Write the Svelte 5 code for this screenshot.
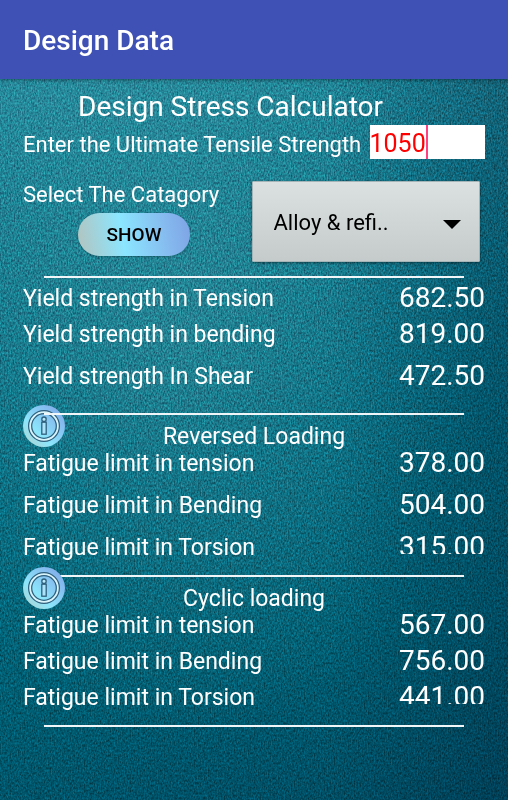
<!--
  Design Stress Calculator

  Takes the ultimate tensile strength and a material category and lists
  the yield strengths and fatigue limits.
-->

<script>
  let tensile = $state("1050");
  let category = $state("alloy");
  let applied = $state(1050);

  const format = (factor) => (applied * factor).toFixed(2);

  const yieldRows = $derived([
    { label: "Yield strength in Tension", value: format(0.65) },
    { label: "Yield strength in bending", value: format(0.78) },
    { label: "Yield strength In Shear", value: format(0.45) },
  ]);

  const loadings = $derived([
    {
      id: "reversed",
      title: "Reversed Loading",
      rows: [
        { label: "Fatigue limit in tension", value: format(0.36) },
        { label: "Fatigue limit in Bending", value: format(0.48) },
        { label: "Fatigue limit in Torsion", value: format(0.3) },
      ],
    },
    {
      id: "cyclic",
      title: "Cyclic loading",
      rows: [
        { label: "Fatigue limit in tension", value: format(0.54) },
        { label: "Fatigue limit in Bending", value: format(0.72) },
        { label: "Fatigue limit in Torsion", value: format(0.42) },
      ],
    },
  ]);

  function show() {
    applied = Number(tensile) || 0;
  }
</script>

{#snippet results(rows)}
  {#each rows as row}
    <div class="row">
      <dt>{row.label}</dt>
      <dd>{row.value}</dd>
    </div>
  {/each}
{/snippet}

<div class="screen">
  <!-- Brushed grain over the gradient -->
  <svg class="grain" aria-hidden="true">
    <filter
      id="grain"
      x="0"
      y="0"
      width="100%"
      height="100%"
      color-interpolation-filters="sRGB"
    >
      <feTurbulence type="fractalNoise" baseFrequency="0.7 0.4" numOctaves="2" seed="4" />
      <feColorMatrix
        values="1.4 0 0 0 -0.16  1.4 0 0 0 -0.2  1.4 0 0 0 -0.2  0 0 0 0 1"
      />
    </filter>
    <rect width="100%" height="100%" filter="url(#grain)" />
  </svg>

  <header class="app-bar">
    <h1>Design Data</h1>
  </header>

  <main>
    <h2>Design Stress Calculator</h2>

    <div class="strength">
      <label for="tensile">Enter the Ultimate Tensile Strength</label>
      <div class="field">
        <input id="tensile" type="text" inputmode="decimal" bind:value={tensile} />
        <span class="caret"></span>
      </div>
    </div>

    <div class="category">
      <div class="category-left">
        <label for="category">Select The Catagory</label>
        <button class="show" type="button" onclick={show}>SHOW</button>
      </div>
      <div class="picker">
        <select id="category" bind:value={category}>
          <option value="alloy">Alloy &amp; refi..</option>
        </select>
        <svg class="arrow" viewBox="0 0 18 9" aria-hidden="true">
          <path d="M0 0h18L9 9z" />
        </svg>
      </div>
    </div>

    <hr />
    <dl class="yield">
      {@render results(yieldRows)}
    </dl>

    {#each loadings as loading}
      <section class={loading.id}>
        <hr />
        <div class="section-head">
          <button class="info" type="button" aria-label="About {loading.title}">
            <svg viewBox="0 0 42 42" aria-hidden="true">
              <g fill="none" stroke="#2f5f7c">
                <circle cx="21" cy="21" r="14" stroke="#d9f3fb" stroke-width="2.4" />
                <circle cx="21" cy="21" r="15.4" stroke-width="1.2" />
                <circle cx="21" cy="21" r="12.3" stroke-width="1.2" />
                <circle cx="21" cy="14.2" r="2.2" fill="#b9ebfb" stroke-width="1.3" />
                <rect x="18.8" y="17.2" width="4.4" height="12" fill="#a9e4fb" stroke-width="1.3" />
              </g>
            </svg>
          </button>
          <h3>{loading.title}</h3>
        </div>
        <dl>
          {@render results(loading.rows)}
        </dl>
      </section>
    {/each}

    <hr />
  </main>
</div>

<style>
  :global(body) {
    margin: 0;
    background: #00566b;
  }

  .screen {
    position: relative;
    isolation: isolate;
    min-height: 100vh;
    font-family: Roboto, "Liberation Sans", sans-serif;
    font-size: 22px;
    color: #fff;
    background:
      linear-gradient(90deg, transparent 65%, rgba(0, 35, 60, 0.3)),
      radial-gradient(ellipse 60% 50% at 35% 42%, rgba(80, 165, 175, 0.34), transparent),
      linear-gradient(168deg, #2b90a2 0%, #14798c 28%, #04687c 55%, #005c70 78%, #004a60 100%);
  }

  .grain {
    position: absolute;
    inset: 0;
    z-index: -1;
    width: 100%;
    height: 100%;
    mix-blend-mode: overlay;
    opacity: 0.4;
  }

  .app-bar {
    display: flex;
    align-items: center;
    box-sizing: border-box;
    height: 79px;
    padding: 2px 23px 0;
    background: #3f51b5;
    box-shadow: 0 1px 4px rgba(0, 0, 0, 0.4);
  }

  h1,
  h2,
  h3,
  dl,
  dd {
    margin: 0;
    font-weight: 400;
  }

  h1 {
    font-size: 28px;
    font-weight: 500;
    line-height: 32px;
  }

  main {
    padding: 12px 23px 24px;
  }

  h2 {
    padding-left: 55px;
    font-size: 28px;
    line-height: 32px;
  }

  .strength {
    display: grid;
    grid-template-columns: 3fr 1fr;
    align-items: end;
    margin-top: 2px;
  }

  .strength label {
    line-height: 28px;
    white-space: nowrap;
  }

  .field {
    position: relative;
    min-width: 0;
    height: 34px;
  }

  .field input {
    display: block;
    box-sizing: border-box;
    width: 100%;
    height: 34px;
    padding: 2px 0 0;
    border: 0;
    outline: 0;
    border-radius: 0;
    background: #fff;
    color: #f00;
    font: inherit;
    font-size: 25px;
    caret-color: #ff4081;
  }

  .caret {
    position: absolute;
    top: 0;
    left: 56px;
    width: 2px;
    height: 34px;
    background: #ff4081;
  }

  .category {
    display: grid;
    grid-template-columns: 1fr 1fr;
    margin-top: 22px;
    padding-right: 5px;
  }

  .category-left label {
    display: block;
    line-height: 28px;
  }

  .show {
    display: block;
    width: 112px;
    height: 43px;
    margin: 4px 0 0 55px;
    padding: 0;
    border: 0;
    border-radius: 22px;
    background: linear-gradient(80deg, #b3c3bd, #8be6ff 40%, #86bdf0 75%, #7ea2e4);
    box-shadow: 0 1px 2px rgba(0, 0, 0, 0.25);
    color: #000;
    font: inherit;
    font-size: 19px;
    font-weight: 500;
  }

  .picker {
    position: relative;
  }

  .picker select {
    box-sizing: border-box;
    width: 100%;
    height: 81px;
    padding: 2px 50px 0 21px;
    appearance: none;
    border: 1px solid #a5b4b7;
    border-radius: 1px;
    background: linear-gradient(#dbe0e1, #c5cbcb);
    box-shadow: 0 1px 3px rgba(0, 0, 0, 0.45);
    color: #000;
    font: inherit;
  }

  .arrow {
    position: absolute;
    top: 39px;
    right: 19px;
    width: 18px;
    height: 9px;
    pointer-events: none;
  }

  hr {
    height: 2px;
    margin: 0 21px;
    border: 0;
    background: #f1f6f8;
  }

  .category + hr {
    margin-top: 14px;
  }

  .row {
    display: flex;
    justify-content: space-between;
    align-items: flex-start;
    height: 36px;
  }

  dt {
    font-size: 23px;
    line-height: 36px;
  }

  dd {
    font-size: 28px;
    line-height: 34px;
  }

  .yield {
    padding: 3px 0 18px;
  }

  .yield .row:last-child {
    margin-top: 6px;
  }

  section dl {
    padding-bottom: 9px;
  }

  .reversed .row + .row {
    margin-top: 6px;
  }

  /* The last value of each loading block is cut off by its own box */
  section .row:last-child dd {
    height: 24px;
    overflow: hidden;
  }

  .section-head {
    position: relative;
    box-sizing: border-box;
    height: 31px;
    padding-top: 9px;
    text-align: center;
  }

  h3 {
    font-size: 23px;
    line-height: 26px;
  }

  .info {
    position: absolute;
    top: -10px;
    left: 0;
    width: 42px;
    height: 42px;
    padding: 0;
    border: 0;
    border-radius: 50%;
    background: linear-gradient(45deg, #b9cfc6, #8be6fb 35%, #86bdf0 72%, #7ea6e6);
  }

  .info svg {
    display: block;
  }

  /* The first rule runs over its button */
  .reversed hr {
    position: relative;
    z-index: 1;
  }
</style>
